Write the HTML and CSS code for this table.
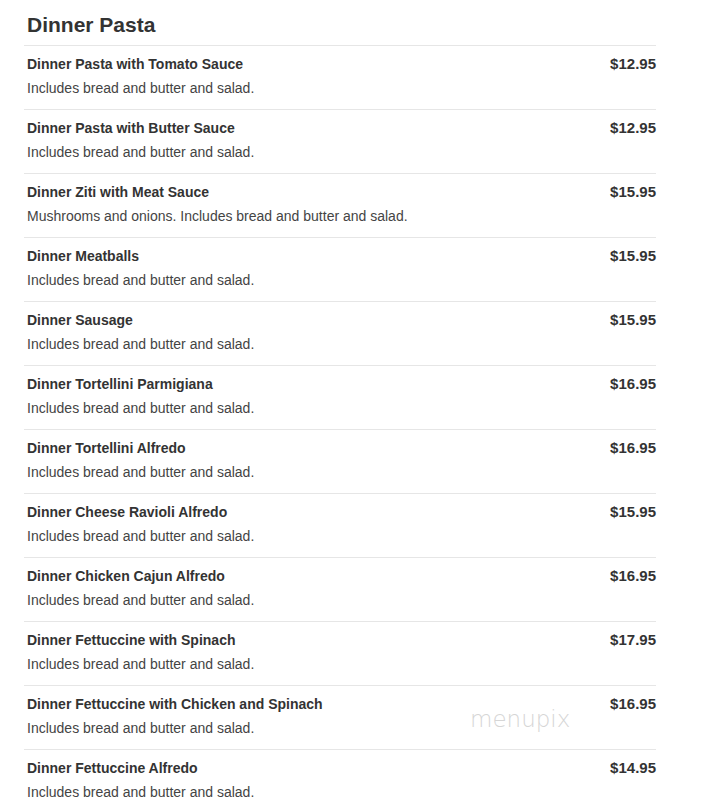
FILE: index.html
```html
<!DOCTYPE html>
<html>
<head>
<meta charset="utf-8">
<link rel="stylesheet" href="styles.css">
</head>
<body>
<div class="menu">
  <h2 class="section-title">Dinner Pasta</h2>
  <div class="items">
    <div class="item"><div class="info"><div class="name">Dinner Pasta with Tomato Sauce</div><div class="desc">Includes bread and butter and salad.</div></div><div class="price">$12.95</div></div>
    <div class="item"><div class="info"><div class="name">Dinner Pasta with Butter Sauce</div><div class="desc">Includes bread and butter and salad.</div></div><div class="price">$12.95</div></div>
    <div class="item"><div class="info"><div class="name">Dinner Ziti with Meat Sauce</div><div class="desc">Mushrooms and onions. Includes bread and butter and salad.</div></div><div class="price">$15.95</div></div>
    <div class="item"><div class="info"><div class="name">Dinner Meatballs</div><div class="desc">Includes bread and butter and salad.</div></div><div class="price">$15.95</div></div>
    <div class="item"><div class="info"><div class="name">Dinner Sausage</div><div class="desc">Includes bread and butter and salad.</div></div><div class="price">$15.95</div></div>
    <div class="item"><div class="info"><div class="name">Dinner Tortellini Parmigiana</div><div class="desc">Includes bread and butter and salad.</div></div><div class="price">$16.95</div></div>
    <div class="item"><div class="info"><div class="name">Dinner Tortellini Alfredo</div><div class="desc">Includes bread and butter and salad.</div></div><div class="price">$16.95</div></div>
    <div class="item"><div class="info"><div class="name">Dinner Cheese Ravioli Alfredo</div><div class="desc">Includes bread and butter and salad.</div></div><div class="price">$15.95</div></div>
    <div class="item"><div class="info"><div class="name">Dinner Chicken Cajun Alfredo</div><div class="desc">Includes bread and butter and salad.</div></div><div class="price">$16.95</div></div>
    <div class="item"><div class="info"><div class="name">Dinner Fettuccine with Spinach</div><div class="desc">Includes bread and butter and salad.</div></div><div class="price">$17.95</div></div>
    <div class="item"><div class="info"><div class="name">Dinner Fettuccine with Chicken and Spinach</div><div class="desc">Includes bread and butter and salad.</div></div><div class="price">$16.95</div><span class="watermark">menupix</span></div>
    <div class="item"><div class="info"><div class="name">Dinner Fettuccine Alfredo</div><div class="desc">Includes bread and butter and salad.</div></div><div class="price">$14.95</div></div>
  </div>
</div>
</body>
</html>
```

FILE: styles.css
```css
html, body {
  margin: 0;
  padding: 0;
  background: #fff;
}
body {
  font-family: "Liberation Sans", Arial, sans-serif;
  color: #333;
}
.menu {
  width: 632px;
  margin-left: 24px;
}
.section-title {
  margin: 11px 0 6px 0;
  padding-left: 3px;
  font-size: 21px;
  line-height: 28px;
  font-weight: bold;
  color: #333;
}
.item {
  position: relative;
  display: flex;
  justify-content: space-between;
  align-items: flex-start;
  border-top: 1px solid #e6e6e6;
  padding: 8px 0 11px 3px;
}
.name {
  font-size: 14px;
  font-weight: bold;
  line-height: 20px;
  color: #333;
}
.desc {
  margin-top: 4px;
  font-size: 14px;
  line-height: 20px;
  color: #444;
}
.price {
  font-size: 15px;
  font-weight: bold;
  line-height: 20px;
  color: #333;
}
.watermark {
  position: absolute;
  left: 446px;
  top: 20px;
  font-family: "DejaVu Sans", sans-serif;
  font-weight: 200;
  font-size: 23px;
  color: #d6d6d6;
  pointer-events: none;
}
```
